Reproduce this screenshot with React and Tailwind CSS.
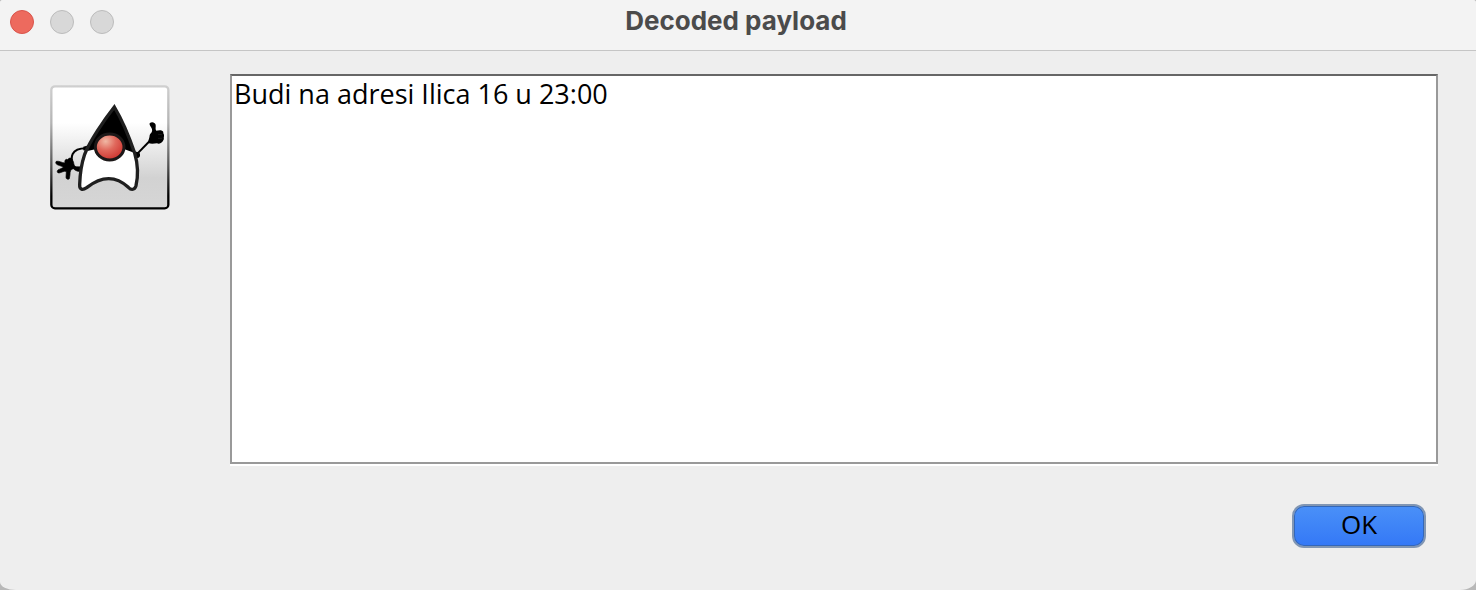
function DukeIcon() {
  return (
    <svg className="h-[125px] w-[120px]" viewBox="18 15 360 375" role="img" aria-label="Java">
      <defs>
        <linearGradient id="tile" x1="0" y1="0" x2="0" y2="1">
          <stop offset="0.3" stopColor="#ffffff" />
          <stop offset="0.75" stopColor="#d2d2d2" />
          <stop offset="1" stopColor="#d6d6d6" />
        </linearGradient>
        <linearGradient id="frame" x1="0" y1="0" x2="0" y2="1">
          <stop offset="0" stopColor="#cfcfcf" />
          <stop offset="0.3" stopColor="#b4b4b4" />
          <stop offset="0.65" stopColor="#555555" />
          <stop offset="0.9" stopColor="#000000" />
        </linearGradient>
        <radialGradient id="nose" cx="0.36" cy="0.28" r="0.7">
          <stop offset="0" stopColor="#f0b8a4" />
          <stop offset="0.5" stopColor="#e0685c" />
          <stop offset="1" stopColor="#cf3a34" />
        </radialGradient>
      </defs>
      <rect x="22" y="19" width="351" height="366" rx="11" fill="url(#tile)" stroke="url(#frame)" strokeWidth="7" />
      <path d="M132 205C110 204 92 210 86 222C82 230 84 236 82 246" fill="none" stroke="#000" strokeWidth="6" />
      <path d="M118 200L134 196L132 214L118 211Z" fill="#000" />
      <path d="M37 244C44 242 53 248 63 249C61 240 66 236 71 239C76 231 86 234 86 241C91 249 88 254 93 259C99 262 108 259 112 262L110 274C98 275 93 270 88 266C80 267 78 275 78 284L76 296C72 300 66 297 66 292L67 275C61 271 53 278 45 279C39 279 38 272 43 269C48 267 55 265 58 261C51 258 43 256 38 253C34 249 35 246 37 244Z" fill="#000" stroke="#000" strokeWidth="2" />
      <path d="M278 223L320 180" fill="none" stroke="#000" strokeWidth="6" />
      <path d="M270 216C278 214 286 216 288 222C290 232 282 236 276 233Z" fill="#000" />
      <path d="M317 130C322 124 333 126 335 134C336 141 333 148 337 152C344 150 356 149 358 156C356 160 362 163 360 169C358 173 362 178 357 182C354 188 346 193 339 190C330 191 319 192 313 189C312 181 317 174 317 166C319 159 326 158 324 148C323 141 315 137 317 130Z" fill="#000" />
      <path d="M342 163L354 164M342 175L354 175" fill="none" stroke="#444" strokeWidth="1" />
      <path d="M211 81C180 120 136 186 122 223C113 250 108 283 107 313C106 330 116 331 128 323C170 290 211 283 253 322C263 332 272 329 276 317C283 286 281 250 272 219C259 181 232 116 211 81Z" fill="#fff" />
      <path d="M211 81C180 120 143 179 130 213L154 208L242 208L272 219C259 181 232 116 211 81Z" fill="#000" />
      <path d="M211 81C180 120 136 186 122 223C113 250 108 283 107 313C106 330 116 331 128 323C170 290 211 283 253 322C263 332 272 329 276 317C283 286 281 250 272 219C259 181 232 116 211 81Z" fill="none" stroke="#1f1f1f" strokeWidth="10" />
      <ellipse cx="197" cy="201" rx="43" ry="39" fill="url(#nose)" stroke="#1c1818" strokeWidth="9" />
    </svg>
  );
}

export default function App() {
  return (
    <div className="min-h-screen bg-[#b8b8b8]">
      <div className="flex min-h-screen flex-col overflow-hidden rounded-t-[3px] rounded-br-[16px_10px] rounded-bl-[16px_8px] bg-[#eeeeee]">
        <header className="grid h-[51px] grid-cols-[1fr_auto_1fr] items-start border-b border-[#c5c5c5] bg-[#f3f3f3] pr-3 pl-2">
          <div className="flex gap-4 pt-2.5 pl-0.5">
            <button aria-label="Close" className="size-6 rounded-full border border-[#d9544b] bg-[#ed6a5e]" />
            <button aria-label="Minimize" className="size-6 rounded-full border border-[#bcbcbc] bg-[#d8d8d8]" />
            <button aria-label="Zoom" className="size-6 rounded-full border border-[#bcbcbc] bg-[#d8d8d8]" />
          </div>
          <h1 className="pt-[5px] font-['Inter',sans-serif] text-[26px] leading-8 font-bold text-[#4b4b4b]">Decoded payload</h1>
        </header>
        <main className="flex flex-1 flex-col px-[38px] pt-[23px] pb-[42px] font-['Open_Sans',sans-serif] text-[27px] font-medium text-black">
          <div className="flex flex-1 gap-[60px] pl-3">
            <div className="shrink-0 pt-[11px]">
              <DukeIcon />
            </div>
            <div className="flex min-h-[200px] flex-1 border-b-2 border-white">
              <textarea
                aria-label="Decoded payload"
                defaultValue="Budi na adresi Ilica 16 u 23:00"
                spellCheck={false}
                className="flex-1 resize-none border-2 border-[#999999] border-t-[#666666] bg-white px-0.5 pt-0.5 leading-8 outline-none"
              />
            </div>
          </div>
          <div className="flex justify-end pt-[38px] pr-3">
            <button className="flex h-11 w-[134px] items-center justify-center rounded-xl border-2 border-[#8196b3] bg-linear-to-b from-[#4a90f8] to-[#3478f6] pb-1 text-[26px] leading-8 shadow-[inset_0_0_0_1px_#3467b8]">
              OK
            </button>
          </div>
        </main>
      </div>
    </div>
  );
}
